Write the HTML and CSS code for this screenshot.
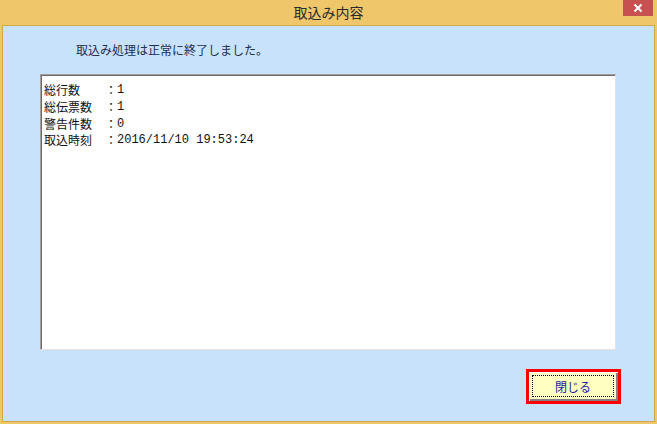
FILE: index.html
```html
<!DOCTYPE html>
<html lang="ja">
<head>
<meta charset="utf-8">
<title>取込み内容</title>
<link rel="stylesheet" href="styles.css">
</head>
<body>
<div class="window">
  <div class="titlebar">
    <span class="title">取込み内容</span>
    <div class="close">
      <svg width="10" height="10" viewBox="0 0 10 10"><path d="M1.5 1.5 L8.5 8.5 M8.5 1.5 L1.5 8.5" stroke="#fff" stroke-width="2"/></svg>
    </div>
  </div>
  <div class="content">
    <p class="message">取込み処理は正常に終了しました。</p>
    <div class="result">
      <div class="row"><span class="label">総行数</span><span class="colon">：</span><span class="value">1</span></div>
      <div class="row"><span class="label">総伝票数</span><span class="colon">：</span><span class="value">1</span></div>
      <div class="row"><span class="label">警告件数</span><span class="colon">：</span><span class="value">0</span></div>
      <div class="row"><span class="label">取込時刻</span><span class="colon">：</span><span class="value">2016/11/10 19:53:24</span></div>
    </div>
    <div class="footer">
      <div class="focus-frame">
        <button class="btn"><span class="btn-inner">閉じる</span></button>
      </div>
    </div>
  </div>
</div>
</body>
</html>
```
FILE: styles.css
```css
html, body {
  margin: 0;
  padding: 0;
}
body {
  width: 657px;
  height: 424px;
  overflow: hidden;
  font-family: "Noto Sans CJK JP", "Noto Sans", sans-serif;
}
.window {
  width: 657px;
  height: 424px;
  box-sizing: border-box;
  background: #F0C66A;
  padding: 0 2px 2px 2px;
  display: flex;
  flex-direction: column;
}
.titlebar {
  height: 25px;
  flex: none;
  display: flex;
  align-items: center;
  justify-content: center;
  position: relative;
}
.title {
  font-size: 14px;
  color: #2b2b2b;
  line-height: 25px;
}
.close {
  position: absolute;
  top: 0;
  right: 2px;
  width: 30px;
  height: 16px;
  background: #C75050;
  display: flex;
  align-items: center;
  justify-content: center;
}
.content {
  flex: 1;
  background: #C8E2FB;
  border: 1px solid #D0A750;
  display: flex;
  flex-direction: column;
}
.message {
  margin: 14px 0 0 73px;
  font-size: 12px;
  line-height: 20px;
  color: #1c2f4c;
}
.result {
  margin: 14px 0 0 37px;
  width: 576px;
  height: 276px;
  box-sizing: border-box;
  background: #fff;
  border: 1px solid;
  border-color: #a0a0a0 #e3e3e3 #e3e3e3 #a0a0a0;
  box-shadow: inset 1px 1px 0 #696969;
  padding: 7px 3px;
  font-size: 12px;
  color: #111;
}
.row {
  display: grid;
  grid-template-columns: 61px 12px auto;
  align-items: center;
  height: 16.8px;
}
.row > span {
  line-height: 16.8px;
  height: 16.8px;
}
.colon {
  text-align: center;
}
.value {
  font-family: "Liberation Mono", monospace;
}
.footer {
  margin-top: auto;
  display: flex;
  justify-content: flex-end;
  padding: 0 33px 17px 0;
}
.focus-frame {
  width: 95px;
  height: 35px;
  box-sizing: border-box;
  border: 3px solid #FF0000;
  display: flex;
}
.btn {
  flex: 1;
  margin: 0;
  padding: 3px;
  background: #FFFFC0;
  border: none;
  box-shadow: inset 1px 1px 0 #ffffff, inset -2px -2px 0 #808080;
  display: flex;
  font-family: inherit;
}
.btn-inner {
  flex: 1;
  margin: 0 1px 1px 0;
  border: 1px dotted #000;
  display: flex;
  align-items: center;
  justify-content: center;
  font-size: 12px;
  color: #1a1aa0;
}
```
